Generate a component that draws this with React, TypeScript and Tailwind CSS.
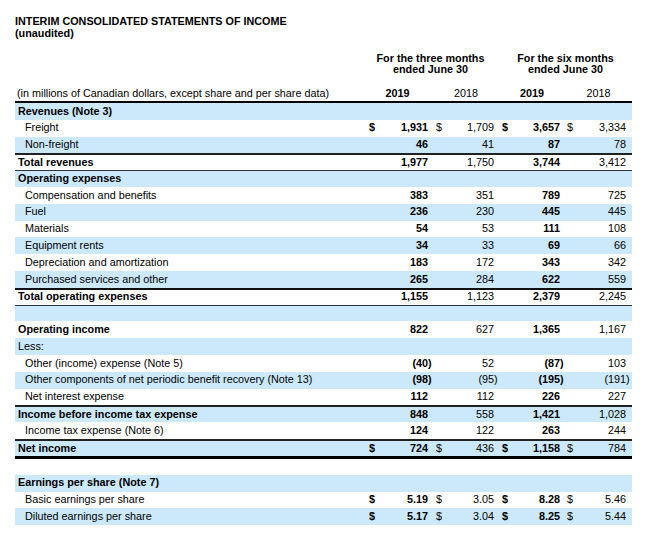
type Kind = 'head' | 'sub' | 'plain' | 'blank';

type Line = {
  label: string;
  kind: Kind;
  shade: boolean;
  vals?: [string, string, string, string];
  dollar?: boolean;
  edge?: string;
};

const lines: Line[] = [
  { label: 'Revenues (Note 3)', kind: 'head', shade: true },
  { label: 'Freight', kind: 'sub', shade: false, vals: ['1,931', '1,709', '3,657', '3,334'], dollar: true },
  { label: 'Non-freight', kind: 'sub', shade: true, vals: ['46', '41', '87', '78'] },
  { label: 'Total revenues', kind: 'head', shade: false, vals: ['1,977', '1,750', '3,744', '3,412'], edge: 'border-t-2 border-[#222]' },
  { label: 'Operating expenses', kind: 'head', shade: true, edge: 'border-t border-[#333]' },
  { label: 'Compensation and benefits', kind: 'sub', shade: false, vals: ['383', '351', '789', '725'] },
  { label: 'Fuel', kind: 'sub', shade: true, vals: ['236', '230', '445', '445'] },
  { label: 'Materials', kind: 'sub', shade: false, vals: ['54', '53', '111', '108'] },
  { label: 'Equipment rents', kind: 'sub', shade: true, vals: ['34', '33', '69', '66'] },
  { label: 'Depreciation and amortization', kind: 'sub', shade: false, vals: ['183', '172', '343', '342'] },
  { label: 'Purchased services and other', kind: 'sub', shade: true, vals: ['265', '284', '622', '559'] },
  { label: 'Total operating expenses', kind: 'head', shade: false, vals: ['1,155', '1,123', '2,379', '2,245'], edge: 'border-t-2 border-[#111]' },
  { label: '', kind: 'blank', shade: true, edge: 'border-t border-[#333]' },
  { label: 'Operating income', kind: 'head', shade: false, vals: ['822', '627', '1,365', '1,167'] },
  { label: 'Less:', kind: 'plain', shade: true },
  { label: 'Other (income) expense (Note 5)', kind: 'sub', shade: false, vals: ['(40)', '52', '(87)', '103'] },
  { label: 'Other components of net periodic benefit recovery (Note 13)', kind: 'sub', shade: true, vals: ['(98)', '(95)', '(195)', '(191)'] },
  { label: 'Net interest expense', kind: 'sub', shade: false, vals: ['112', '112', '226', '227'] },
  { label: 'Income before income tax expense', kind: 'head', shade: true, vals: ['848', '558', '1,421', '1,028'], edge: 'border-t-2 border-[#222]' },
  { label: 'Income tax expense (Note 6)', kind: 'sub', shade: false, vals: ['124', '122', '263', '244'] },
  { label: 'Net income', kind: 'head', shade: true, vals: ['724', '436', '1,158', '784'], dollar: true, edge: 'border-t-2 border-[#222]' },
];

const eps: Line[] = [
  { label: 'Earnings per share (Note 7)', kind: 'head', shade: true },
  { label: 'Basic earnings per share', kind: 'sub', shade: false, vals: ['5.19', '3.05', '8.28', '5.46'], dollar: true },
  { label: 'Diluted earnings per share', kind: 'sub', shade: true, vals: ['5.17', '3.04', '8.25', '5.44'], dollar: true },
];

// widths + where the $ and the figure sit inside each column
const cols = [
  'w-[71px] pl-[7px] pr-[5px] font-bold',
  'w-[66px] pl-[3px] pr-[5px]',
  'w-[66px] pl-[3px] pr-[5px] font-bold',
  'w-[67px] pl-[2px] pr-[6px]',
];

function Figure({ v }: { v: string }) {
  if (v.startsWith('(')) {
    return (
      <span>
        {v.slice(0, -1)}
        <span className="inline-block w-0">)</span>
      </span>
    );
  }
  return <span>{v}</span>;
}

function Row({ line }: { line: Line }) {
  const labelCls =
    line.kind === 'head'
      ? 'pl-[3px] font-bold'
      : line.kind === 'sub'
        ? 'pl-[10px]'
        : 'pl-[3px]';

  return (
    <div className={`flex h-[16.8px] items-center ${line.shade ? 'bg-[#cce9fb]' : 'bg-white'} ${line.edge ?? ''}`}>
      <div className={`w-[347px] whitespace-nowrap ${labelCls}`}>{line.label}</div>
      {cols.map((c, i) => (
        <div key={i} className={`flex justify-between ${c}`}>
          <span>{line.dollar ? '$' : ''}</span>
          {line.vals && <Figure v={line.vals[i]} />}
        </div>
      ))}
    </div>
  );
}

export default function App() {
  return (
    <div className="h-[541px] w-[658px] bg-white pl-[15px] pt-[16px] font-['Liberation_Sans',Arial,sans-serif] text-[10.8px] leading-[11.5px] text-black">
      <div className="font-bold">
        <div>INTERIM CONSOLIDATED STATEMENTS OF INCOME</div>
        <div>(unaudited)</div>
      </div>

      <div className="w-[617px]">
        {/* column headings */}
        <div className="mt-[14px] flex h-[31px] items-start font-bold leading-[11px]">
          <div className="w-[347px]" />
          <div className="w-[137px] text-center">
            <div>For the three months</div>
            <div>ended June 30</div>
          </div>
          <div className="w-[133px] text-center">
            <div>For the six months</div>
            <div>ended June 30</div>
          </div>
        </div>
        <div className="flex h-[19px] items-center border-b-2 border-black pt-[3px]">
          <div className="w-[347px] whitespace-nowrap pl-[2px]">(in millions of Canadian dollars, except share and per share data)</div>
          <div className="w-[71px] text-center font-bold">2019</div>
          <div className="w-[66px] text-center">2018</div>
          <div className="w-[66px] text-center font-bold">2019</div>
          <div className="w-[67px] text-center">2018</div>
        </div>

        {lines.map((l, i) => (
          <Row key={i} line={l} />
        ))}

        <div className="h-[19px] border-t-[3px] border-black" />

        {eps.map((l, i) => (
          <Row key={i} line={l} />
        ))}
      </div>
    </div>
  );
}
